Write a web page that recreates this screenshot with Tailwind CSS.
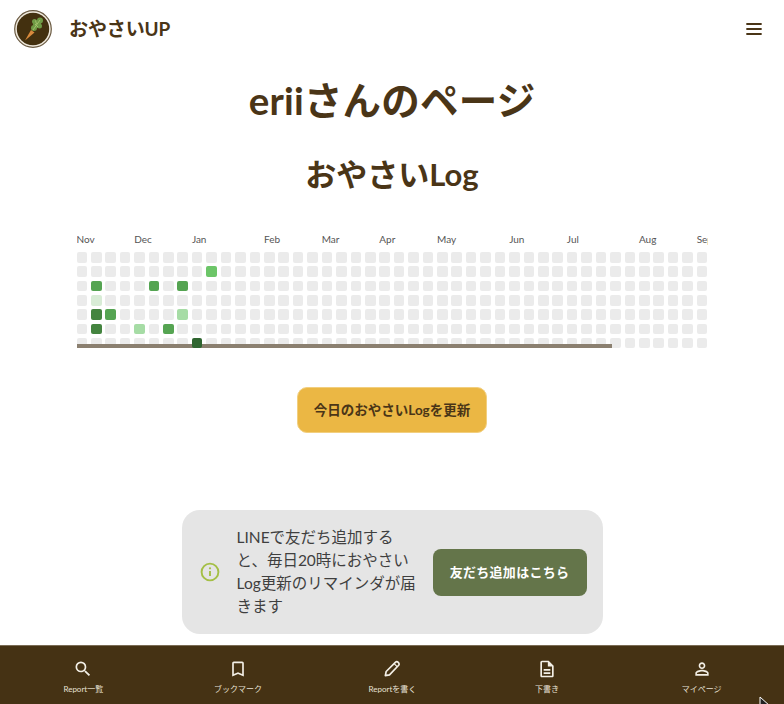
<!DOCTYPE html>
<html lang="ja">
<head>
<meta charset="utf-8">
<script src="https://cdn.jsdelivr.net/npm/@tailwindcss/browser@4"></script>
</head>
<body class="bg-white">
<div class="relative w-[784px] h-[704px] overflow-hidden flex flex-col font-['Lato','Noto_Sans_CJK_JP',sans-serif] text-[#4a3517]">
  <header class="h-[57px] shrink-0 flex items-center justify-between pl-[14px] pr-[22px]">
    <div class="flex items-center gap-[17px]">
      <svg class="w-[38px] h-[38px]" viewBox="0 0 38 38">
        <circle cx="19" cy="19" r="18.300" fill="#efe9dd" stroke="#6a5a42" stroke-width="1.200"/>
        <circle cx="19" cy="19" r="16.200" fill="#43300f"/>
        <path d="M11 30.500 L17 20 L20.500 22.500 Z" fill="#d98a3c"/>
        <g fill="#6f9a45">
          <circle cx="20" cy="18" r="3"/>
          <circle cx="23" cy="14" r="4"/>
          <circle cx="26" cy="10.500" r="3"/>
          <circle cx="25.500" cy="16" r="2.500"/>
          <circle cx="20.500" cy="11.500" r="2.500"/>
        </g>
        <path d="M19 20 L26 10 M21 14 L24 17 M21.500 10.500 L22.500 14" stroke="#a6c46f" stroke-width="0.900" fill="none"/>
      </svg>
      <span class="text-[19px] leading-none font-bold tracking-[-0.1px]">おやさいUP</span>
    </div>
    <svg class="w-[16px] h-[14px]" viewBox="0 0 16 14" fill="none" stroke="#4a3517" stroke-width="1.800" stroke-linecap="round">
      <path d="M1 2h14M1 7h14M1 12h14"/>
    </svg>
  </header>

  <main class="flex-1 flex flex-col items-center">
    <h1 class="mt-[17px] h-[52px] flex items-center text-[38.500px] leading-none font-bold tracking-[0.2px]">eriiさんのページ</h1>
    <h2 class="mt-[26px] h-[44px] flex items-center text-[31px] leading-none font-bold">おやさいLog</h2>

    <div class="relative mt-[34px] w-[631px] overflow-hidden">
      <div class="grid grid-cols-[repeat(44,10.6px)] gap-x-[3.83px] h-[22px] text-[10px] leading-[18px] text-[#555] whitespace-nowrap">
        <span class="col-start-1">Nov</span>
        <span class="col-start-5">Dec</span>
        <span class="col-start-9">Jan</span>
        <span class="col-start-14">Feb</span>
        <span class="col-start-18">Mar</span>
        <span class="col-start-22">Apr</span>
        <span class="col-start-26">May</span>
        <span class="col-start-31">Jun</span>
        <span class="col-start-35">Jul</span>
        <span class="col-start-40">Aug</span>
        <span class="col-start-44">Sep</span>
      </div>
      <div id="heat" class="grid grid-flow-col grid-rows-[repeat(7,10.6px)] grid-cols-[repeat(44,10.6px)] gap-x-[3.83px] gap-y-[3.73px]"></div>
      <div class="absolute left-0 top-[114px] w-[535px] h-[4px] bg-[#8b8070]"></div>
      <div class="h-[1px]"></div>
    </div>

    <button class="mt-[38px] w-[190px] h-[46px] rounded-[10px] bg-[#ebb744] border border-[#f2cf7f] text-[13.500px] font-bold text-[#4a3517]">今日のおやさいLogを更新</button>

    <section class="mt-[77px] w-[421px] h-[124px] rounded-[18px] bg-[#e5e5e5] flex items-center pl-[18px] pr-[16px]">
      <svg class="w-[20px] h-[20px] shrink-0" viewBox="0 0 20 20" fill="none">
        <circle cx="10" cy="10" r="8.400" stroke="#a4bf45" stroke-width="1.900"/>
        <circle cx="10" cy="6.300" r="1.100" fill="#a4bf45"/>
        <path d="M10 9v5" stroke="#a4bf45" stroke-width="1.900"/>
      </svg>
      <p class="ml-[17px] w-[180px] text-[15.500px] leading-[23px] text-[#3f3f3f]">LINEで友だち追加すると、毎日20時におやさいLog更新のリマインダが届きます</p>
      <button class="ml-auto w-[154px] h-[47px] rounded-[8px] bg-[#64754a] text-white text-[13px] font-bold tracking-[0.3px]">友だち追加はこちら</button>
    </section>
  </main>

  <nav class="h-[59px] shrink-0 bg-[#453214] border-t border-[#7a6c55] grid grid-cols-5 pl-[6px] pr-[5px] text-[#f3efe6]">
    <a class="flex flex-col items-center pt-[13px]">
      <svg class="w-[20px] h-[20px]" viewBox="0 0 24 24" fill="currentColor"><path d="M15.500 14h-.79l-.28-.27A6.470 6.470 0 0 0 16 9.500 6.500 6.500 0 1 0 9.500 16c1.610 0 3.090-.59 4.230-1.570l.27.28v.79l5 4.990L20.490 19l-4.990-5zm-6 0C7.010 14 5 11.990 5 9.500S7.010 5 9.500 5 14 7.010 14 9.500 11.990 14 9.500 14z"/></svg>
      <span class="mt-[4px] text-[8px] leading-[12px] text-[#e6e0d4]">Report一覧</span>
    </a>
    <a class="flex flex-col items-center pt-[13px]">
      <svg class="w-[20px] h-[20px]" viewBox="0 0 24 24" fill="currentColor"><path d="M17 3H7c-1.100 0-2 .9-2 2v16l7-3 7 3V5c0-1.100-.9-2-2-2zm0 15-5-2.180L7 18V5h10v13z"/></svg>
      <span class="mt-[4px] text-[8px] leading-[12px] text-[#e6e0d4]">ブックマーク</span>
    </a>
    <a class="flex flex-col items-center pt-[13px]">
      <svg class="w-[20px] h-[20px]" viewBox="0 0 24 24" fill="none" stroke="currentColor" stroke-width="2" stroke-linejoin="round"><path d="M4 20l1-5L16 4c1-1 2.500-1 3.500 0s1.500 2.500.5 3.500L9 19l-5 1z"/><path d="M14.500 5.500l4 4" stroke-width="1.500"/></svg>
      <span class="mt-[4px] text-[8px] leading-[12px] text-[#e6e0d4]">Reportを書く</span>
    </a>
    <a class="flex flex-col items-center pt-[13px]">
      <svg class="w-[20px] h-[20px]" viewBox="0 0 24 24" fill="currentColor"><path d="M8 16h8v2H8zm0-4h8v2H8zm6-10H6c-1.100 0-2 .9-2 2v16c0 1.100.89 2 1.990 2H18c1.100 0 2-.9 2-2V8l-6-6zm4 18H6V4h7v5h5v11z"/></svg>
      <span class="mt-[4px] text-[8px] leading-[12px] text-[#e6e0d4]">下書き</span>
    </a>
    <a class="flex flex-col items-center pt-[13px]">
      <svg class="w-[20px] h-[20px]" viewBox="0 0 24 24" fill="currentColor"><path d="M12 5.900a2.100 2.100 0 1 1 0 4.200 2.100 2.100 0 0 1 0-4.200m0 9c2.970 0 6.100 1.460 6.100 2.100v1.100H5.900V17c0-.64 3.130-2.100 6.100-2.100M12 4C9.790 4 8 5.790 8 8s1.790 4 4 4 4-1.790 4-4-1.790-4-4-4zm0 9c-2.670 0-8 1.340-8 4v3h16v-3c0-2.660-5.330-4-8-4z"/></svg>
      <span class="mt-[4px] text-[8px] leading-[12px] text-[#e6e0d4]">マイページ</span>
    </a>
  </nav>

  <svg class="absolute left-[759px] top-[696px] w-[12px] h-[16px]" viewBox="0 0 12 16"><path d="M1 1v13l3.500-3.200L7 15l2-1-2.300-4H11z" fill="#222" stroke="#fff" stroke-width="1"/></svg>
</div>
<script>
  const colored = {
    "9,1": "bg-[#6cc568]",
    "1,2": "bg-[#55a452]",
    "5,2": "bg-[#55a452]",
    "7,2": "bg-[#55a452]",
    "1,3": "bg-[#d8ecd6]",
    "1,4": "bg-[#44843f]",
    "2,4": "bg-[#55a452]",
    "7,4": "bg-[#a6dca5]",
    "1,5": "bg-[#44843f]",
    "4,5": "bg-[#a6dca5]",
    "6,5": "bg-[#55a452]",
    "8,6": "bg-[#2f6530] relative z-10"
  };
  const heat = document.getElementById("heat");
  for (let c = 0; c < 44; c++) {
    for (let r = 0; r < 7; r++) {
      const d = document.createElement("div");
      d.className = "rounded-[2px] " + (colored[c + "," + r] || "bg-[#ebebeb]");
      heat.appendChild(d);
    }
  }
</script>
</body>
</html>
